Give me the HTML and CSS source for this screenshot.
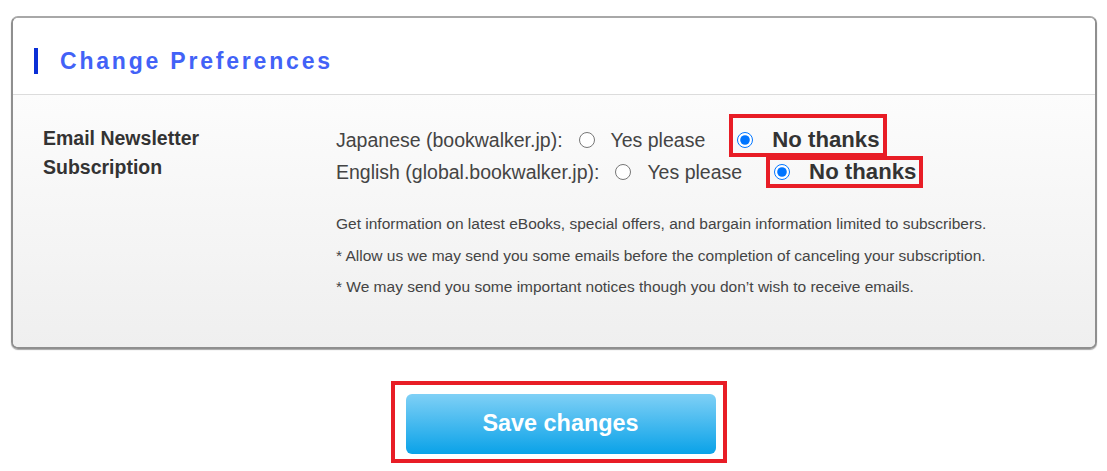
FILE: index.html
```html
<!DOCTYPE html>
<html lang="en">
<head>
  <meta charset="UTF-8">
  <meta name="viewport" content="width=device-width, initial-scale=1.0">
  <title>Change Preferences</title>
  <link rel="stylesheet" href="styles.css">
</head>
<body>
  <form class="prefs">
    <section class="card">
      <h2 class="card-title">Change Preferences</h2>
      <div class="card-body">
        <div class="field-label">Email Newsletter<br>Subscription</div>
        <div class="field">
          <div class="choice">
            <span class="site">Japanese (bookwalker.jp):</span>
            <label class="opt opt-yes"><input type="radio" name="jp" value="yes"> Yes please</label>
            <label class="opt opt-no mark-jp"><input type="radio" name="jp" value="no" checked> No thanks</label>
          </div>
          <div class="choice">
            <span class="site">English (global.bookwalker.jp):</span>
            <label class="opt opt-yes"><input type="radio" name="en" value="yes"> Yes please</label>
            <label class="opt opt-no mark-en"><input type="radio" name="en" value="no" checked> No thanks</label>
          </div>
          <p class="note">Get information on latest eBooks, special offers, and bargain information limited to subscribers.</p>
          <p class="note">* Allow us we may send you some emails before the completion of canceling your subscription.</p>
          <p class="note">* We may send you some important notices though you don’t wish to receive emails.</p>
        </div>
      </div>
    </section>
    <div class="actions">
      <div class="mark-btn">
        <button type="submit" class="save">Save changes</button>
      </div>
    </div>
  </form>
</body>
</html>
```

FILE: styles.css
```css
body {
  margin: 0;
  font-family: "Liberation Sans", Arial, sans-serif;
  background: #fff;
  color: #333;
}
.prefs {
  padding: 16px 10px 0 11px;
}
.card {
  border: 2px solid #8f8f8f;
  border-top-color: #a8a8a8;
  border-radius: 7px;
  box-shadow: 0 1px 1px rgba(0, 0, 0, 0.35);
  overflow: hidden;
}
.card-title {
  margin: 0;
  height: 66px;
  padding: 10px 0 0 21px;
  display: flex;
  align-items: center;
  font-size: 23px;
  font-weight: bold;
  letter-spacing: 2.8px;
  color: #4262f7;
  background: #fff;
  border-bottom: 1px solid #dcdcdc;
}
.card-title::before {
  content: "";
  width: 4px;
  height: 26px;
  background: #0a2fd6;
  margin-right: 22px;
}
.card-body {
  display: flex;
  padding: 29px 0 44px 30px;
  background: linear-gradient(#fcfcfc, #efefef);
}
.field-label {
  width: 293px;
  font-size: 19.5px;
  font-weight: bold;
  line-height: 29px;
  color: #333;
}
.field {
  flex: 1;
}
.choice {
  display: flex;
  align-items: center;
  height: 32px;
  font-size: 19.5px;
  color: #444;
}
.opt {
  display: flex;
  align-items: center;
  gap: 16px;
}
.opt input {
  margin: 0;
  width: 16px;
  height: 16px;
}
.opt-yes {
  margin: 0 24px 0 16px;
}
.opt-no {
  height: 24px;
  font-size: 22.2px;
  font-weight: bold;
  color: #333;
  gap: 19px;
  padding: 0 3px 0 4px;
  border: 4px solid #e81d26;
}
.mark-jp {
  padding: 10px 3px 1px 4px;
  margin-top: -9px;
}
.note {
  margin: 0;
  font-size: 15.5px;
  line-height: 31.5px;
  color: #444;
}
.choice + .note {
  margin-top: 20px;
}
.actions {
  display: flex;
  justify-content: center;
  padding: 32px 0 0 9px;
}
.mark-btn {
  border: 4px solid #e81d26;
  padding: 9px 7px 5px 11px;
}
.save {
  display: block;
  width: 310px;
  height: 60px;
  border: none;
  border-radius: 6px;
  background: linear-gradient(#7fd0f6, #0aa2e8);
  color: #fff;
  font-family: "Liberation Sans", Arial, sans-serif;
  font-size: 23.4px;
  font-weight: bold;
  cursor: pointer;
}
```
